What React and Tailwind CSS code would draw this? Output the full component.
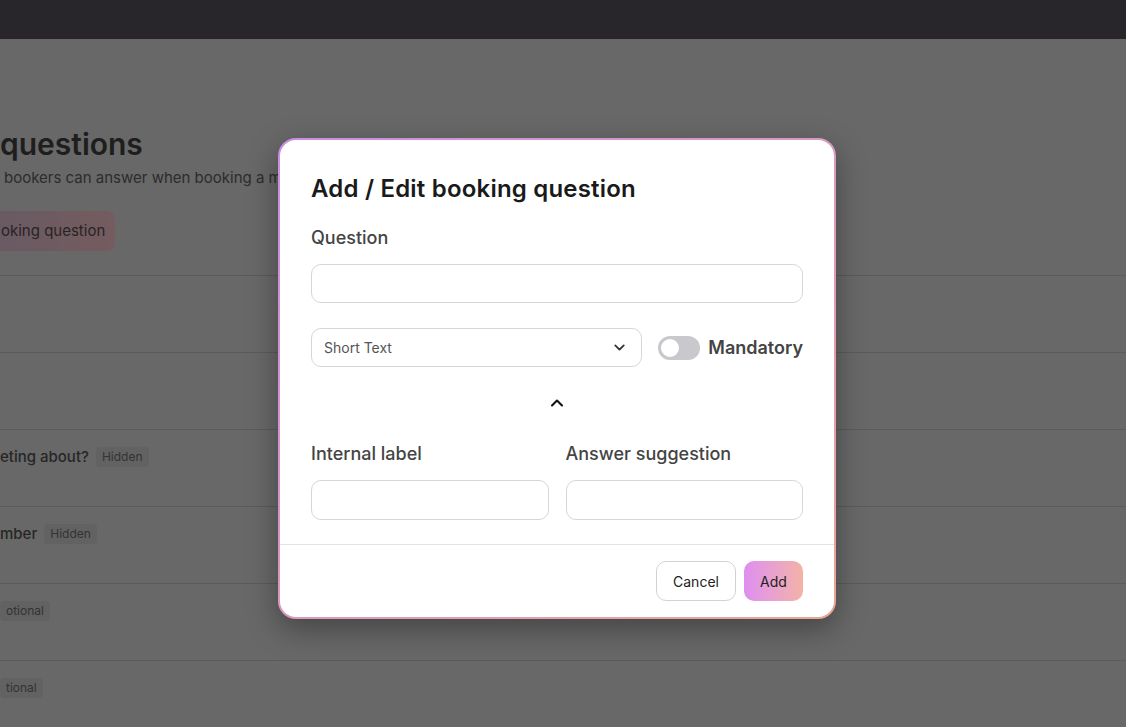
import React, { useState } from 'react';

const rows = [
    { text: '', badge: null },
    { text: '', badge: null },
    { text: 'eting about?', badge: 'Hidden' },
    { text: 'mber', badge: 'Hidden' },
    { text: null, badge: 'otional' },
    { text: null, badge: 'tional' },
];

const ChevronDown = ({ className }) => (
    <svg viewBox="0 0 24 24" fill="none" stroke="currentColor" strokeWidth="2.5" strokeLinecap="round" strokeLinejoin="round" className={className}>
        <path d="M6 9l6 6 6-6" />
    </svg>
);

const ChevronUp = ({ className }) => (
    <svg viewBox="0 0 24 24" fill="none" stroke="currentColor" strokeWidth="2.5" strokeLinecap="round" strokeLinejoin="round" className={className}>
        <path d="M6 15l6-6 6 6" />
    </svg>
);

const BackgroundPage = () => (
    <div className="min-h-[727px] bg-[#686868] overflow-hidden">
        <div className="h-[39px] bg-[#28252b]" />
        <div className="pt-[86px]">
            <h1 className="text-[30px] leading-[38px] font-semibold text-[#1e1e1e] whitespace-nowrap">questions</h1>
            <p className="mt-[5px] text-[15px] leading-[20px] text-[#2c2c2c] whitespace-nowrap pl-[4px]">
                bookers can answer when booking a meeting
            </p>
            <div className="mt-[23px] flex">
                <div className="h-[40px] pl-[1px] pr-[10px] flex items-center rounded-r-lg bg-gradient-to-r from-[#695a63] to-[#745c5f] text-[15px] text-[#2a2324] whitespace-nowrap">
                    oking question
                </div>
            </div>
            <div className="mt-[24px]">
                {rows.map((row, i) => (
                    <div key={i} className="h-[77px] border-t border-[#5b5b5b] flex items-start pt-[16px]">
                        <div className="flex items-center gap-[7px] h-[22px]">
                            {row.text && (
                                <span className="text-[15px] font-medium text-[#262626] whitespace-nowrap">{row.text}</span>
                            )}
                            {row.badge && (
                                <span className="text-[12px] text-[#333] bg-[#626262] rounded px-[6px] py-[2px] leading-[16px]">
                                    {row.badge}
                                </span>
                            )}
                        </div>
                    </div>
                ))}
            </div>
        </div>
    </div>
);

const QuestionModal = () => {
    const [question, setQuestion] = useState('');
    const [mandatory, setMandatory] = useState(false);
    const [label, setLabel] = useState('');
    const [suggestion, setSuggestion] = useState('');

    return (
        <div className="w-[558px] rounded-[18px] p-[2px] bg-gradient-to-br from-[#c98ee3] via-[#dc98bf] to-[#eda494] shadow-[0_10px_30px_rgba(0,0,0,0.35)]">
            <div className="bg-white rounded-[16px] overflow-hidden">
                <div className="px-[31px] pt-[33px] pb-[24px]">
                    <h2 className="text-[24px] leading-[32px] font-semibold text-[#1a1a1a] tracking-[0.2px]">
                        Add / Edit booking question
                    </h2>

                    <label className="block mt-[19px] text-[18px] leading-[28px] font-medium text-[#444]">Question</label>
                    <input
                        type="text"
                        value={question}
                        onChange={(e) => setQuestion(e.target.value)}
                        className="mt-[12px] w-full h-[39px] px-3 rounded-[10px] border border-[#d6d6d6] outline-none"
                    />

                    <div className="mt-[25px] flex items-center">
                        <button className="flex-1 h-[39px] px-[12px] rounded-[10px] border border-[#d6d6d6] flex items-center justify-between text-[14px] text-[#555]">
                            <span>Short Text</span>
                            <ChevronDown className="w-[17px] h-[17px] text-[#333] mr-[1px]" />
                        </button>
                        <button
                            onClick={() => setMandatory(!mandatory)}
                            className={`ml-[16px] w-[42px] h-[24px] rounded-full p-[3px] flex items-center ${mandatory ? 'bg-[#d98fe9] justify-end' : 'bg-[#c8c8cd] justify-start'}`}
                        >
                            <span className="w-[18px] h-[18px] rounded-full bg-white block" />
                        </button>
                        <span className="ml-[8px] text-[18px] font-semibold text-[#444]">Mandatory</span>
                    </div>

                    <div className="mt-[26px] flex justify-center">
                        <ChevronUp className="w-[20px] h-[20px] text-[#111]" />
                    </div>

                    <div className="mt-[27px] grid grid-cols-2 gap-[17px]">
                        <div>
                            <label className="block text-[18px] leading-[28px] font-medium text-[#444]">Internal label</label>
                            <input
                                type="text"
                                value={label}
                                onChange={(e) => setLabel(e.target.value)}
                                className="mt-[12px] w-full h-[40px] px-3 rounded-[10px] border border-[#d6d6d6] outline-none"
                            />
                        </div>
                        <div>
                            <label className="block text-[18px] leading-[28px] font-medium text-[#444]">Answer suggestion</label>
                            <input
                                type="text"
                                value={suggestion}
                                onChange={(e) => setSuggestion(e.target.value)}
                                className="mt-[12px] w-full h-[40px] px-3 rounded-[10px] border border-[#d6d6d6] outline-none"
                            />
                        </div>
                    </div>
                </div>

                <div className="border-t border-[#e2e2e2] px-[31px] pt-[16px] pb-[16px] flex justify-end gap-[8px]">
                    <button className="w-[80px] h-[40px] rounded-[10px] border border-[#d2d2d2] text-[14px] text-[#222]">
                        Cancel
                    </button>
                    <button className="w-[59px] h-[40px] rounded-[10px] bg-gradient-to-r from-[#de8ef0] to-[#f4b2a6] text-[14px] text-[#222]">
                        Add
                    </button>
                </div>
            </div>
        </div>
    );
};

export default function App() {
    return (
        <div className="relative w-full min-h-[727px] font-['Inter',sans-serif]">
            <BackgroundPage />
            <div className="absolute inset-0 flex items-start justify-center pt-[138px] pr-[12px]">
                <QuestionModal />
            </div>
        </div>
    );
}
